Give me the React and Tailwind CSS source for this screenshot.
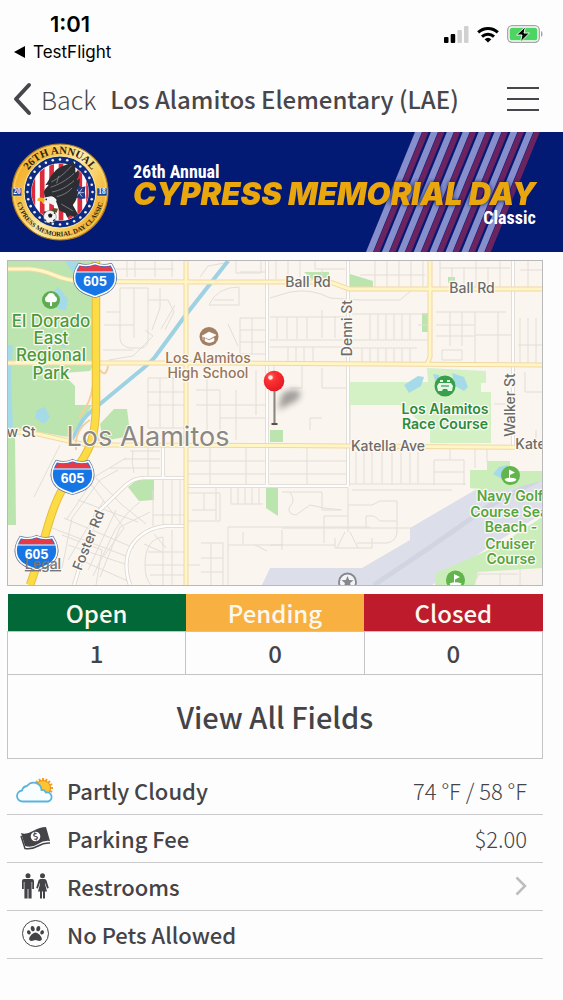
import React from "react";
import { FaPaw } from "react-icons/fa";

function StatusBar() {
  return (
    <div className="flex h-[66px] items-start justify-between pl-[14px] pr-5 font-['Inter',sans-serif] text-black">
      <div className="pt-3">
        <div className="pl-9 text-[22px] font-semibold leading-6">1:01</div>
        <a href="#testflight" className="flex items-center gap-2 pt-1 text-[17px] leading-6">
          <svg viewBox="0 0 11 12" className="h-3 w-[11px]"><path d="M0 6 11 0v12z" /></svg>
          TestFlight
        </a>
      </div>
      <div className="flex items-center gap-2 pt-[25px]">
        <svg viewBox="0 0 25 17" className="h-[17px] w-[25px]">
          <rect x="0" y="11" width="4.5" height="6" rx="1" />
          <rect x="6.7" y="8" width="4.5" height="9" rx="1" />
          <rect x="13.4" y="4" width="4.5" height="13" rx="1" fill="#d0d0d2" />
          <rect x="20" y="0" width="4.5" height="17" rx="1" fill="#d0d0d2" />
        </svg>
        <svg viewBox="0 0 22 17" className="h-[17px] w-[22px]" fill="none" stroke="#000" strokeWidth="3">
          <path d="M1.2 6.4a14 14 0 0 1 19.6 0M5 10.6a8.6 8.6 0 0 1 12 0" />
          <path d="M11 16.6 7.6 13.3a5 5 0 0 1 6.8 0z" fill="#000" stroke="none" />
        </svg>
        <svg viewBox="0 0 36 18" className="h-[18px] w-9">
          <rect x="0.7" y="0.7" width="31.6" height="16.6" rx="4.5" fill="none" stroke="#a5a5a5" strokeWidth="1.3" />
          <rect x="2.7" y="2.7" width="27.6" height="12.6" rx="2.6" fill="#4cd562" />
          <path d="M34 6c2 .8 2 5.2 0 6z" fill="#a5a5a5" />
          <path d="M18.500 1.500 9.500 10h5.500l-1.500 7 9-9h-5.500z" fill="#000" stroke="#e9fbe9" strokeWidth="1" />
        </svg>
      </div>
    </div>
  );
}

function Header() {
  return (
    <header className="flex h-[66px] items-center pl-[13px] pr-6 text-[#47474b]">
      <button className="flex shrink-0 items-center gap-2 text-[25px] font-light leading-8">
        <svg viewBox="0 0 20 34" className="h-[34px] w-5" fill="none" stroke="#47474b" strokeWidth="4" strokeLinecap="round" strokeLinejoin="round">
          <path d="M16 3 3 17l13 14" />
        </svg>
        Back
      </button>
      <h1 className="ml-[14px] flex-1 whitespace-nowrap text-[24px] font-medium leading-8">Los Alamitos Elementary (LAE)</h1>
      <button aria-label="Menu">
        <svg viewBox="0 0 32 26" className="h-[26px] w-8" stroke="#47474b" strokeWidth="2">
          <path d="M0 2h32M0 13h32M0 24h32" />
        </svg>
      </button>
    </header>
  );
}

const stars = Array.from({ length: 28 }, (_, i) => {
  const a = (i * Math.PI * 2) / 28;
  return [166 + 97 * Math.cos(a), 170 + 97 * Math.sin(a)];
});

function Badge() {
  return (
    <svg viewBox="20 24 292 292" className="h-[98px] w-[98px] shrink-0">
      <defs>
        <linearGradient id="shine" x1="0" x2="1" y1="0.2" y2="0.8">
          <stop offset="0" stopColor="#f2a51a" />
          <stop offset="0.35" stopColor="#f9cf62" />
          <stop offset="0.5" stopColor="#fdeeb0" />
          <stop offset="0.7" stopColor="#f9cf62" />
          <stop offset="1" stopColor="#eb9d12" />
        </linearGradient>
        <clipPath id="disc"><circle cx="166" cy="170" r="85" /></clipPath>
        <path id="arcTop" d="M52 170a114 114 0 0 1 228 0" />
        <path id="arcBottom" d="M34 170a132 132 0 0 0 264 0" />
      </defs>
      <circle cx="166" cy="170" r="143" fill="url(#shine)" stroke="#a87820" strokeWidth="3" />
      <circle cx="166" cy="170" r="137" fill="none" stroke="#fbe08a" strokeWidth="2" />
      <circle cx="166" cy="170" r="107" fill="#0d2c80" stroke="#f7e2a0" strokeWidth="3" />
      {stars.map(([x, y], i) => (
        <circle key={i} cx={x} cy={y} r="3.8" fill="#eef2ff" />
      ))}
      <circle cx="166" cy="170" r="86" fill="#fff" />
      <g clipPath="url(#disc)" fill="#dc2b3a">
        <rect x="78" y="80" width="14" height="180" />
        <rect x="106" y="80" width="14" height="180" />
        <rect x="134" y="80" width="14" height="180" />
        <rect x="162" y="80" width="14" height="180" />
        <rect x="190" y="80" width="14" height="180" />
        <rect x="218" y="80" width="14" height="180" />
        <rect x="244" y="80" width="10" height="180" />
      </g>
      <path d="M208 155l14-4 8 5 12-3-2 18 2 18-14 2-10-4-10 2z" fill="#203a8c" />
      <path d="M214 160l18 24m0-24-18 24m-3-12h26" stroke="#cfd8f2" strokeWidth="2.5" />
      <path d="M206 80c-24 12-46 14-58 32-14 14-14 24-26 38 6-2 8-2 10-1-6 8-14 14-14 22 2 8 2 12 4 16l32 10 10 28 18 8 6 14 8-8 14 6 10-8-16-28c14-16 12-28 18-44l-9 4c9-14 12-26 12-40l-8 6c4-10 8-20 3-30l-8 8c0-12 0-22-6-33z" fill="#2c2d33" />
      <path d="M140 140c20-10 40-24 60-48M138 156c24-8 50-22 70-42M142 170c24-4 46-16 66-34M156 184c18-4 34-12 46-26M170 206l34 20M162 122l-6 22" fill="none" stroke="#85868c" strokeWidth="2.5" />
      <path d="M132 184c8-4 18 0 24 10l-8 16-12-6-16 2c-8-2-8-10-4-14 4-6 10-8 16-8z" fill="#f3f3f3" />
      <path d="M118 188c-12-4-20 0-20 8l12 2 6 6c4-4 6-10 2-16z" fill="#efae25" />
      <circle cx="125" cy="192" r="2.5" fill="#222" />
      <path d="M146 218l-8 12 18 2 4-12z" fill="#5a5021" />
      <circle cx="136" cy="244" r="19" fill="#f4f4f4" stroke="#555" strokeWidth="1.5" />
      <path d="M130 238l7-5 7 5-3 8h-8zM120 234l6-7-8 2zM149 229l4 8-6-4zM121 250l6 8-8-4zM144 254l8-4-4 9zM133 262l6-3 3 4z" fill="#1d1d1d" />
      <rect x="24" y="158" width="28" height="24" rx="2" fill="#1c47a0" stroke="#f5dc93" strokeWidth="1.5" />
      <rect x="276" y="158" width="30" height="24" rx="2" fill="#1c47a0" stroke="#f5dc93" strokeWidth="1.5" />
      <g className="font-['Liberation_Serif',serif] font-bold">
        <g fill="#fff" fontSize="22" textAnchor="middle">
          <text x="38" y="177">20</text>
          <text x="291" y="177">18</text>
        </g>
        <g fill="#2c2414" textAnchor="middle">
          <text fontSize="32"><textPath href="#arcTop" startOffset="50%">26TH ANNUAL</textPath></text>
          <text fontSize="20"><textPath href="#arcBottom" startOffset="50%">CYPRESS MEMORIAL DAY CLASSIC</textPath></text>
        </g>
      </g>
    </svg>
  );
}

function Banner() {
  return (
    <div className="relative flex h-[120px] items-center gap-6 overflow-hidden bg-[#031a75] pl-[11px] pr-[29px]">
      <svg viewBox="360 0 203 120" className="absolute right-0 top-0 h-full w-[203px]">
        {Array.from({ length: 8 }, (_, i) => (
          <g key={i} transform={`translate(${i * 15.9} 0)`}>
            <path d="M415 0h7l-49 120h-7z" fill="#868ecb" />
            <path d="M422.500 0h6l-49 120h-6z" fill="#6b2460" />
          </g>
        ))}
      </svg>
      <Badge />
      <div className="relative flex-1 whitespace-nowrap pt-2">
        <div className="font-['Roboto_Condensed','Liberation_Sans_Narrow','Liberation_Sans',sans-serif] text-[18px] font-bold leading-5 text-white">26th Annual</div>
        <div className="font-['Inter',sans-serif] text-[31px] font-black italic leading-6 text-[#e9a70d] drop-shadow-[0_0_2px_#031a75]">CYPRESS MEMORIAL DAY</div>
        <div className="text-right font-['Roboto_Condensed','Liberation_Sans_Narrow','Liberation_Sans',sans-serif] text-[18px] font-bold leading-6 text-white">Classic</div>
      </div>
    </div>
  );
}

function Shield({ x, y }) {
  return (
    <g transform={`translate(${x} ${y})`}>
      <path d="M-16-15.500q8 2.500 16-1 8 3.500 16 1 6 9 4 17C17.500 11 9 13.500 0 16.500-9 13.500-17.500 11-20 1.500q-2-8 4-17z" fill="#1676e6" stroke="#5f7699" strokeWidth="3" />
      <path d="M-16-15.500q8 2.500 16-1 8 3.500 16 1 6 9 4 17C17.500 11 9 13.500 0 16.500-9 13.500-17.500 11-20 1.500q-2-8 4-17z" fill="#1676e6" stroke="#fff" strokeWidth="1.5" />
      <path d="M-15-14q8 2 15-1 7 3 15 1l3 5.500h-36z" fill="#e63b46" />
      <path d="M-19-8h38" stroke="#fff" strokeWidth="1.2" />
      <text y="6" textAnchor="middle" fontSize="14" fontWeight="700" fill="#fff" className="font-['Liberation_Sans',sans-serif]">605</text>
    </g>
  );
}

function Flag({ x, y }) {
  return (
    <g transform={`translate(${x} ${y})`}>
      <circle r="9.5" fill="#62b54c" />
      <path d="M-1.500 3v-9l6 3-5 2.500V3z" fill="#fff" />
      <path d="M-6 3.500q6-2.500 12 0-1 3-6 3t-6-3z" fill="#fff" />
    </g>
  );
}

const yellowRoads =
  "M8 269h22q12 1 24 6t24 6q10 1 252 1l19 7h193M8 363h226l308 2M8 431l30 3 35 8q10 3 30 3l180 .5 259 2M186 261v324M430 261v96l-3 7";
const whiteRoads =
  "M267 261v224M348 261v225M513 261v184M186 486h162M163 445v33M186 478h-42q-10 0-18 7l-30 29-22 71M186 526h-20q-22 2-34 19-10 16-2 40";
const minorRoads = [
  "M127 261v16M135 261v16M155 261v16M172 261v16M104 269h70M200 277l8-11 22-4M240 272h26M236 261v12h25v-12M209 305q8-18 30-18v18zM214 300h20",
  "M120 288v50q0 8 10 10h12q6-2 6-8v-52zM134 288v50M106 312h14M104 325h30M103 350h30M148 300h20l6 12-9 18M160 288v20l-8 22M175 305l-14 24M145 330l8 6-20 20-24 4",
  "M240 318h26v36h-26zM240 330h26M240 342h26M252 318v36M238 346l-10-22M148 378h38v50h-38zM160 378v50M173 378v50M148 392h38M148 405h38M196 390h24v40M207 372v58M196 405h70M236 390v50M220 418h46M256 370v45",
  "M276 261v18M288 261v14M300 261v16M315 261v8h30M322 269v14M375 261v26M387 261v26M399 261v26M411 261v26M423 261v26M360 275h65M440 261v26M452 268v20M464 268v20M440 268h70M476 261v27M488 268v20M500 261v26M520 270h22M528 261v26",
  "M270 298l20-6q22-4 40 6l30 2h40l12-10M270 317h75M277 317v22M287 317v22M297 317v22M307 317v22M322 310v28M335 316v22M270 340h160M352 314h75M370 314v26M378 314v26M386 314v26M394 314v26M402 314v26M410 314v26M418 325h12",
  "M270 347h75M288 347v16M296 347v16M304 347v16M313 347v16M352 348h65M362 348v14M370 348v14M378 348v14M386 348v14M394 348v14M402 348v14M410 348v14M436 312h70M450 312v34M462 312v34M436 325h38M475 312v50M436 336h38M498 312v50M475 335h38M442 350h20v10h-20zM520 318v45M528 318v45M536 318v45M518 345h24",
  "M302 366v22h-12M322 368v20h26M274 366v60M310 430v-12h12M350 405v40M494 404h18M525 372v20h17M536 430v15M475 448v20M487 448v14",
  "M130 451h30M124 459h36M110 468h50M133 451q-2 12 1 22M148 448v30M188 461h78M188 474h78M210 448v36M246 448v36M307 448v36M270 461h76M270 474h76M356 452v32M364 452v32M372 452v32M382 452v32M392 452v32M401 452v32M410 452v32M418 452v32M348 484h118M434 460h30v25M434 460v25M434 472h30M450 448v12",
  "M186 493h34v28h-34M192 510h24M204 493v17M216 488v32M231 488v16M238 488v16M245 488v16M252 488v16M259 488v16M231 504h32M228 527h142M228 527v58M228 545h55M243 532v12M201 543h22v42M211 543v42M201 558h22M201 572h22M255 545l12 6",
  "M153 490v36M163 478v48M172 480v46M180 480v46M153 515h32M118 470l-18 10-28 38-10 50M126 458l-30 18-30 44M96 478l25 26 25 20M78 500l60 22M64 518l70 30M52 528l74 28M68 545l60 20M88 480l36 48-20 28M104 500l-36 60M116 510l-28 60M140 502q-12 8-25 28l-22 46M150 512l-30 15-20 50",
  "M145 565q0-26 18-28M145 565h55M148 552h37M150 575h36M163 537v48M172 530v55M154 534l12 14M144 544l18 8M145 565q0 14 6 20M60 445l-26 52M62 535l40 15-6 35M85 562l45 20",
  "M282 492h40v18h18M290 492q6 10 0 14-4 8 6 9l14-10 14 3M324 508l18 2M348 488v44M348 505h24l8-4h17v30q0 10-10 12h-30M366 528v-12h8l6 5h17M324 543v-27h24M282 528h130M282 530v20M270 545h65M335 538v10h37v-10M345 532l-8 16M350 532l8 16M352 490h100",
];

const labels = [
  ["#4a9b3a", 17, 500, [["El Dorado", 51, 327], ["East", 51, 344], ["Regional", 51, 361], ["Park", 51, 379]]],
  ["#97745a", 14, 500, [["Los Alamitos", 208, 363], ["High School", 208, 378]]],
  ["#2a8c3c", 14, 600, [["Los Alamitos", 445, 414], ["Race Course", 445, 429]]],
  ["#55a53f", 14, 600, [["Navy Golf", 510, 501], ["Course Seal", 511, 517], ["Beach -", 511, 532], ["Cruiser", 510, 549], ["Course", 511, 564]]],
  ["#6d6b69", 14, 500, [["Ball Rd", 308, 287], ["Ball Rd", 472, 293], ["Katella Ave", 388, 451], ["Katella", 538, 449], ["w St", 21, 437]]],
];

function FieldMap() {
  return (
    <svg viewBox="8 261 534 324" role="img" aria-label="Map of Los Alamitos" className="block w-full border border-[#b9b9bb] bg-[#faf5ee] font-['Inter',sans-serif]">
      <defs>
        <filter id="soft" x="-0.5" y="-0.5" width="2" height="2"><feGaussianBlur stdDeviation="3" /></filter>
        <radialGradient id="ball" cx="0.35" cy="0.3" r="0.8">
          <stop offset="0" stopColor="#ff6a60" /><stop offset="0.3" stopColor="#fb3032" /><stop offset="1" stopColor="#df1721" />
        </radialGradient>
      </defs>
      <g fill="#bce4ae">
        <path d="M8 261h90v95l-8 15-27 2 6 7 6 6v19h17l-12 20-12 12-60-10zM8 436l7 2 1 87H8zM100 424l14-15h13l2 16-4 12-22 4z" />
        <path d="M304 272h25v9h-15zM350 274l23 7v8l-23-1zM448 277h7v6h-7zM422 313h6v19h-6zM128 487l9-7h17v20l-15 1zM266 488h12v28l-12-8zM270 430h13v12h-13z" />
      </g>
      <path d="M348 382h80l-1-14 59 3v12h-5v9h10v51h-61v-13l-30-25h-52z" fill="#d4f1c6" />
      <path d="M53 292l5-5 10 12-2 12-10-3zM62 330l6 2-3 16-6-4zM37 410l8-3 5 10-6 7-9-6zM8 345h5l-2 30 2 55H8zM65 261h14l-6 12zM404 385l14-9 6 1-3 9-12 7zM452 373l12 4 4 10-4 4-9-5zM433 374l6 1 2 10-5-1z" fill="#a5dbe8" />
      <path d="M270 568h92l48-28v-12l65-38 67-12v36l-44 27-66 44H262z" fill="#dcdfea" />
      <path d="M374 585l55-37 60-42 53-28" fill="none" stroke="#d1d5e2" strokeWidth="5" />
      <path d="M470 470h17v-9h23v10h32v10l-42 10-30-3zM542 517l-42 28-64 28-1 12h107z" fill="#cbedba" />
      <path d="M475 585l3-13 64-4v17z" fill="#f7f2eb" />
      <path d="M493 474l6-7 9-2v14l-8-1z" fill="#a5dbe8" />
      <g fill="none" stroke="#e2ded8" strokeWidth="1">
        {minorRoads.map((d, i) => <path key={i} d={d} />)}
        <path d="M478 574h40M474 582l6-9M520 570v15M500 574v11" />
      </g>
      <path d={whiteRoads} fill="none" stroke="#d9d5cf" strokeWidth="4" />
      <path d={whiteRoads} fill="none" stroke="#fffefc" strokeWidth="2.5" />
      <path d="M228 261l-43 55-30 41q-6 7-20 18l-35 29q-16 12-20 21l-8 14" fill="none" stroke="#9dd2e4" strokeWidth="4" />
      <path d={yellowRoads} fill="none" stroke="#f1d8a6" strokeWidth="5" />
      <path d={yellowRoads} fill="none" stroke="#fff6c4" strokeWidth="3" />
      <path d="M93 385q-2 18-14 32M90 420q-16 10-14 30M97 420q-4 20 8 26M100 370q6 8 8-4" fill="none" stroke="#f3cfa0" strokeWidth="2" />
      <path d="M96 261v141c0 36-6 50-24 72-24 32-26 68-42 111" fill="none" stroke="#e9bd3d" strokeWidth="8.5" />
      <path d="M96 261v141c0 36-6 50-24 72-24 32-26 68-42 111" fill="none" stroke="#fbdc45" strokeWidth="6.5" />

      <Shield x={95} y={280} />
      <Shield x={72.5} y={477} />
      <Shield x={36.5} y={553} />

      <circle cx="51" cy="300" r="9" fill="#5dad50" />
      <path d="M50 306v-4q-5 1-5-3 0-2 2-3 1-3 4-3t4 3q2 1 2 3 0 4-5 3v4z" fill="#fff" />
      <circle cx="209" cy="336.5" r="9.5" fill="#a38064" />
      <path d="M202 336l7-4 7 3-7 4zM205 338.500l4 2 5-2.500v3q-5 3-9 0zM203 336v4" fill="#fff" stroke="#fff" strokeWidth="0.6" />
      <circle cx="445" cy="386" r="10.5" fill="#37a04d" />
      <path d="M439 383h12l2 3-1 5h-4l-1-2h-4l-1 2h-4l-1-5zM440 380h3v2h-3zM447 380h3v2h-3z" fill="#e9f7e9" />
      <path d="M441 386h8" stroke="#37a04d" strokeWidth="1.2" />
      <Flag x={510.5} y={475.5} />
      <Flag x={455.5} y={580} />
      <circle cx="347.5" cy="582" r="8.5" fill="#f4f4f6" stroke="#85878e" strokeWidth="1.8" />
      <path d="M347.500 576l1.600 4 4.400.3-3.400 2.800 1 4.200-3.600-2.300-3.600 2.300 1-4.200-3.400-2.800 4.400-.3z" fill="#85878e" />

      {labels.map(([fill, size, weight, rows], i) => (
        <g key={i} fill={fill} fontSize={size} fontWeight={weight} textAnchor="middle" stroke="#fdfaf4" strokeWidth="2.5" strokeLinejoin="round" paintOrder="stroke">
          {rows.map(([t, x, y], j) => <text key={j} x={x} y={y}>{t}</text>)}
        </g>
      ))}
      <g fill="#6d6b69" fontSize="14" fontWeight="500" textAnchor="middle" stroke="#fdfaf4" strokeWidth="2.5" paintOrder="stroke">
        <text transform="translate(352 328) rotate(-90)">Denni St</text>
        <text transform="translate(515 405) rotate(-90)">Walker St</text>
        <text transform="translate(93 542) rotate(-68)">Foster Rd</text>
      </g>
      <text x="148" y="446" fontSize="27" textAnchor="middle" fill="#8b8781" stroke="#fdfaf4" strokeWidth="2" paintOrder="stroke">Los Alamitos</text>
      <text x="43" y="569" fontSize="14" fontWeight="500" textAnchor="middle" fill="#77767a" textDecoration="underline">Legal</text>

      <path d="M278 410l4-16q8-6 18-3 2 8-8 12z" fill="#555" opacity="0.55" filter="url(#soft)" />
      <path d="M274.500 390v34" stroke="#8a8581" strokeWidth="2" />
      <path d="M271.500 424h6" stroke="#55514e" strokeWidth="2" />
      <circle cx="274" cy="381" r="10.3" fill="url(#ball)" />
      <circle cx="270.5" cy="377.5" r="2.3" fill="#ffe9e6" />
    </svg>
  );
}

function WeatherIcon() {
  return (
    <svg viewBox="0 0 40 26" className="h-[26px] w-10">
      <g stroke="#f4a11f" strokeWidth="2">
        <path d="M28 1v20M18 11h20M21 4l14 14M35 4 21 18M24.200 1.800l7.600 18.400M31.800 1.800l-7.600 18.400M18.800 7.200l18.400 7.600M37.200 7.200l-18.400 7.600" />
      </g>
      <circle cx="28" cy="11" r="7.5" fill="#fbc531" stroke="#f08a1b" strokeWidth="1" />
      <path d="M8 24.500a5.500 5.500 0 0 1-1-11 6 6 0 0 1 5-4.500 8 8 0 0 1 14.500 4q3-.5 4.500 2.500a4.600 4.600 0 0 1 2 9z" fill="#f8fdff" stroke="#5bb4df" strokeWidth="1.8" />
    </svg>
  );
}

function MoneyIcon() {
  return (
    <svg viewBox="0 0 31 24" className="h-6 w-[31px]">
      <path d="M1 7q5 2 12-2t13-4l4 14q-6-1-12 3T5 20z" fill="#444448" />
      <path d="M1 10l4 12.500q7 1 13-2.500t12-3" fill="none" stroke="#444448" strokeWidth="1.5" />
      <circle cx="15.5" cy="10.5" r="4.8" fill="#fff" />
      <text x="15.5" y="13.8" fontSize="9" fontWeight="700" textAnchor="middle" fill="#444448" transform="rotate(-15 15.500 10.500)">$</text>
    </svg>
  );
}

function RestroomIcon() {
  return (
    <svg viewBox="0 0 28 26" className="h-[26px] w-7" fill="#444448">
      <circle cx="7" cy="2.7" r="2.5" />
      <path d="M3 6h8q2 0 2 2v8h-1.800V9h-.6v16.500H7.400V16h-.8v9.500H3.400V9h-.6v7H1V8q0-2 2-2z" />
      <circle cx="21.500" cy="2.7" r="2.500" />
      <path d="M19.500 6h4q1.500 0 2 1.500l2.300 7.500-1.700.6L24.200 10l-.2 1 2 7.500h-2v7h-2v-7h-1v7h-2v-7h-2l2-7.500-.2-1-1.900 5.600-1.700-.6 2.300-7.500q.5-1.500 2-1.500z" />
    </svg>
  );
}

function Row({ icon, label, children, href }) {
  const Tag = href ? "a" : "div";
  return (
    <li className="border-b border-[#c9c8ca]">
      <Tag href={href} className="flex h-[47px] items-center pb-[2px] pr-4">
        <span className="flex w-[60px] shrink-0 items-center justify-center pr-1">{icon}</span>
        <span className="flex-1 text-[22px] font-medium leading-8">{label}</span>
        <span className="text-[22px] font-light leading-8">{children}</span>
      </Tag>
    </li>
  );
}

export default function App() {
  return (
    <div className="min-h-screen bg-[#fefdfe] font-['Noto_Sans_CJK_JP','Noto_Sans',sans-serif] text-[#444448]">
      <StatusBar />
      <Header />
      <Banner />
      <main className="pl-[7px] pr-5 pt-2">
        <FieldMap />
        <table className="mt-2 w-full table-fixed border-collapse text-center text-[24px] font-medium leading-[37px]">
          <thead className="text-[#fdf8ef]">
            <tr>
              <th className="bg-[#026838] p-0 font-medium">Open</th>
              <th className="bg-[#f8b040] p-0 font-medium">Pending</th>
              <th className="bg-[#be1b2d] p-0 font-medium">Closed</th>
            </tr>
          </thead>
          <tbody>
            <tr className="leading-[42px]">
              <td className="border border-[#c4c4c6] p-0">1</td>
              <td className="border border-[#c4c4c6] p-0">0</td>
              <td className="border border-[#c4c4c6] p-0">0</td>
            </tr>
          </tbody>
        </table>
        <button className="block h-[84px] w-full border border-t-0 border-[#c4c4c6] text-[29px] font-medium">View All Fields</button>
        <ul className="pt-2">
          <Row icon={<WeatherIcon />} label="Partly Cloudy">74 °F / 58 °F</Row>
          <Row icon={<MoneyIcon />} label="Parking Fee">$2.00</Row>
          <Row icon={<RestroomIcon />} label="Restrooms" href="#restrooms">
            <svg viewBox="0 0 12 20" className="h-5 w-3" fill="none" stroke="#bdbdc0" strokeWidth="2.5"><path d="M1.500 1.500 10 10l-8.500 8.500" /></svg>
          </Row>
          <Row icon={<span className="flex h-[27px] w-[27px] items-center justify-center rounded-full border border-[#444448]"><FaPaw className="text-[17px]" /></span>} label="No Pets Allowed" />
        </ul>
      </main>
    </div>
  );
}
